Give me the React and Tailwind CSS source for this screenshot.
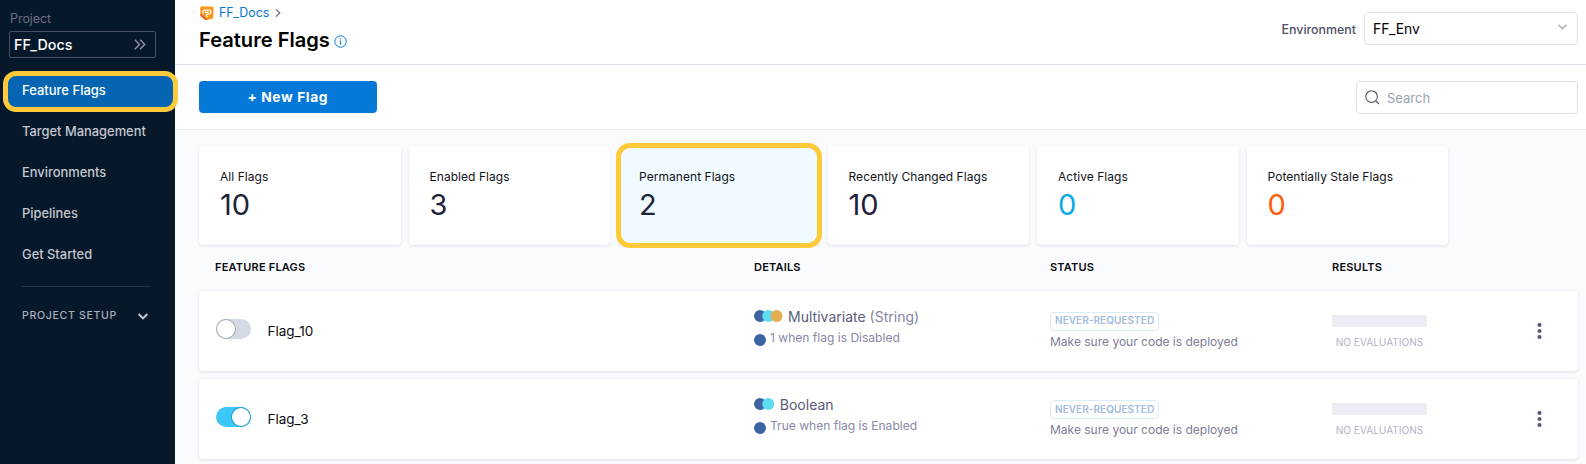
import React from "react";

const NAV = ["Target Management", "Environments", "Pipelines", "Get Started"];

const STATS = [
  { label: "All Flags", value: "10", color: "text-[#22223a]" },
  { label: "Enabled Flags", value: "3", color: "text-[#22223a]" },
  { label: "Permanent Flags", value: "2", color: "text-[#22223a]", selected: true },
  { label: "Recently Changed Flags", value: "10", color: "text-[#22223a]" },
  { label: "Active Flags", value: "0", color: "text-[#07a9e6]" },
  { label: "Potentially Stale Flags", value: "0", color: "text-[#ff5c0a]" },
];

const FLAGS = [
  { name: "Flag_10", on: false, type: "Multivariate", sub: "(String)", rule: "1 when flag is Disabled", dots: ["fill-[#3d64a3]", "fill-[#5fdcf0]", "fill-[#e2ae4f]"] },
  { name: "Flag_3", on: true, type: "Boolean", sub: "", rule: "True when flag is Enabled", dots: ["fill-[#3d64a3]", "fill-[#5fdcf0]"] },
];

function Sidebar() {
  return (
    <aside className="flex h-[464px] w-[175px] shrink-0 flex-col bg-[#07182b]">
      <div className="pt-[9px] pl-[10px] text-[12.6px] leading-5 tracking-[-0.1px] text-[#6b6d85]">Project</div>
      <div className="mt-[2px] ml-[9px] flex h-[27px] w-[147px] items-center justify-between rounded-[2px] border border-[#4a4f68] pr-[9px] pl-[4px]">
        <span className="pb-px text-[14.3px] font-medium leading-[23px] text-white">FF_Docs</span>
        <svg className="mb-px h-[11px] w-[12px]" viewBox="0 0 12 11" fill="none" stroke="#8c8fa3" strokeWidth="1.5">
          <path d="M0.8 0.8l4.7 4.7-4.7 4.7M6 0.8l4.7 4.7L6 10.2" />
        </svg>
      </div>
      <div className="relative z-10 mt-[12.5px] ml-[3px] flex h-[41px] w-[175px] shrink-0 items-center rounded-[13px] border-[5.5px] border-[#ffca3a] bg-[#0565b3] pb-px pl-[14px] text-[13px] font-medium text-white">
        Feature Flags
      </div>
      <nav className="flex flex-col pl-[22px]">
        {NAV.map((n) => (
          <div key={n} className="flex h-[40.9px] items-center text-[12.9px] font-medium text-[#c3c6cd]">{n}</div>
        ))}
      </nav>
      <div className="mt-[11px] ml-[22px] h-px w-[129px] bg-[#26364a]" />
      <div className="mt-[19px] ml-[22px] flex h-5 w-[126px] items-center justify-between">
        <span className="text-[10.6px] font-medium tracking-[0.65px] text-[#a9adb8]">PROJECT SETUP</span>
        <svg className="h-[7px] w-[10px]" viewBox="0 0 10 7" fill="none" stroke="#c3c6cd" strokeWidth="2">
          <path d="M0.7 1L5 5.4L9.3 1" />
        </svg>
      </div>
    </aside>
  );
}

function Header() {
  return (
    <header className="flex h-[65px] justify-between border-b border-[#e0e0ed] bg-white pr-[8px] pl-[24px]">
      <div className="flex flex-col">
        <div className="mt-[3px] flex h-5 items-center">
          <svg className="mb-px ml-px h-[14px] w-[14px]" viewBox="0 0 14 14">
            <path d="M2 0.2L11.6 0.6Q13.6 0.8 13.6 2.6L13.3 11.2Q13.2 12.8 11.8 13L6.8 13.8Q5.4 14 4.4 13.3L1.2 10.6Q0.5 10 0.5 9L0.2 2Q0.2 0.2 2 0.2Z" fill="#f7981d" />
            <path d="M0.4 7.6L3.4 10L8 13.6L6.4 13.9Q5.2 14 4.4 13.3L1.2 10.6Q0.5 10 0.5 9Z" fill="#e8601e" />
            <path d="M3 7.2Q2.4 4.2 5 4.1L9 4.2Q11.2 4.6 10.9 6.3Q10.6 7.7 9 8L6.2 8.6L7 10.8M5.2 6.4H8.2" fill="none" stroke="#fff" strokeWidth="1.2" strokeLinecap="round" strokeLinejoin="round" />
          </svg>
          <span className="ml-[5px] text-[12.4px] text-[#0278d5]">FF_Docs</span>
          <svg className="ml-[6px] h-[8px] w-[6px]" viewBox="0 0 6 8" fill="none" stroke="#6b6d85" strokeWidth="1.2">
            <path d="M1 0.4L4.8 4L1 7.6" />
          </svg>
        </div>
        <div className="mt-[4px] flex h-[26px] items-center">
          <h1 className="text-[20.1px] font-semibold leading-[26px] text-black">Feature Flags</h1>
          <svg className="mt-[2px] ml-[4px] h-[13px] w-[13px]" viewBox="0 0 13 13" fill="none" stroke="#0278d5">
            <circle cx="6.5" cy="6.5" r="5.7" strokeWidth="1" />
            <path d="M6.5 5.6V9.4M6.5 3.4V4.6" strokeWidth="1.2" />
          </svg>
        </div>
      </div>
      <div className="mt-[12px] flex h-[33px] items-center">
        <span className="mr-[8px] pt-[3px] text-[12.4px] font-medium text-[#4f5068]">Environment</span>
        <div className="flex h-[33px] w-[214px] items-center justify-between rounded-[4px] border border-[#dfdfeb] bg-white pr-[10px] pl-[8px]">
          <span className="pt-px text-[13.9px] leading-5 text-black">FF_Env</span>
          <svg className="mb-[3px] h-[6px] w-[9px]" viewBox="0 0 9 6" fill="none" stroke="#a9abb8" strokeWidth="1.4">
            <path d="M0.6 0.8L4.5 4.8L8.4 0.8" />
          </svg>
        </div>
      </div>
    </header>
  );
}

function Toolbar() {
  return (
    <div className="flex h-[65px] items-center justify-between border-b border-[#e9ebf3] bg-white pr-[8px] pl-[24px]">
      <button className="h-[32px] w-[177.5px] rounded-[4px] bg-[#0678d8] text-[13.8px] font-bold tracking-[0.6px] text-white">+ New Flag</button>
      <div className="flex h-[33px] w-[222px] items-center rounded-[4px] border border-[#dfdfeb] pl-[8px]">
        <svg className="h-[15px] w-[15px]" viewBox="0 0 15 15" fill="none" stroke="#4f5162" strokeWidth="1.1">
          <circle cx="6.6" cy="6.6" r="5.8" />
          <path d="M10.8 10.8L14 14" />
        </svg>
        <span className="ml-[7px] pt-px text-[13px] leading-5 text-[#97a3b2]">Search</span>
      </div>
    </div>
  );
}

function StatCard({ label, value, color, selected }) {
  return (
    <div className={"relative h-[99px] w-[201.5px] rounded-[4px] pt-[21px] pl-[21px] shadow-[0_1px_3px_rgba(40,41,61,0.12)] " + (selected ? "bg-[#effbff]" : "bg-white")}>
      <div className="text-[12px] leading-5 tracking-[0.05px] text-[#111118]">{label}</div>
      <div className={"mt-[1px] text-[29px] leading-[34px] " + color}>{value}</div>
      {selected && <div className="absolute -top-[3px] -left-[2px] h-[105px] w-[206px] rounded-[14px] border-[5.5px] border-[#ffca3a]" />}
    </div>
  );
}

function Toggle({ on }) {
  return (
    <div className={"flex h-[20px] w-[35px] items-center rounded-full px-px " + (on ? "justify-end bg-[#3dc7f6]" : "bg-[#d3dae3]")}>
      <div className={"h-[18px] w-[18px] rounded-full bg-white " + (on ? "shadow-[0_0_0_1px_#1c9fd0]" : "shadow-[0_0_0_1px_#a3abb6]")} />
    </div>
  );
}

function FlagRow({ flag }) {
  const w = 12 + (flag.dots.length - 1) * 8.3;
  return (
    <div className="flex h-[80px] rounded-[4px] bg-white shadow-[0_1px_3px_rgba(40,41,61,0.14)]">
      <div className="flex w-[555px] pl-[17px]">
        <div className="pt-[28px]"><Toggle on={flag.on} /></div>
        <div className="pt-[30px] pl-[16.5px] text-[13.5px] leading-5 text-[#0b0b0d]">{flag.name}</div>
      </div>
      <div className="w-[296px]">
        <div className="mt-[14px] flex h-6 items-center">
          <svg className="mb-[3px] h-[12px]" width={w} height="12">
            {flag.dots.map((c, i) => <circle key={c} cx={6 + i * 8.3} cy="6" r="6" className={c} />)}
          </svg>
          <span className="ml-[5.5px] text-[14px] leading-5 text-[#5a5b78]">{flag.type}</span>
          {flag.sub && <span className="ml-[4px] text-[14px] leading-5 text-[#8485a4]">{flag.sub}</span>}
        </div>
        <div className="flex h-[18px] items-center">
          <svg className="mt-[4px] h-[12px] w-[12px]" viewBox="0 0 12 12"><circle cx="6" cy="6" r="6" className="fill-[#3d64a3]" /></svg>
          <span className="ml-[4px] text-[12.05px] text-[#8888a6]">{flag.rule}</span>
        </div>
      </div>
      <div className="w-[282px] pt-[21px]">
        <div className="flex h-[19px] w-[109px] items-center rounded-[4px] border border-[#dceaf3] pb-px pl-[4px] text-[10.1px] font-semibold whitespace-nowrap text-[#a3bbdc]">NEVER-REQUESTED</div>
        <div className="mt-[1px] text-[12px] leading-5 text-[#7d7d96]">Make sure your code is deployed</div>
      </div>
      <div className="w-[95px] pt-[24px]">
        <div className="h-[12px] rounded-[2px] bg-[#ececf5]" />
        <div className="mt-[5px] text-center text-[10.1px] leading-5 text-[#b2b2c8]">NO EVALUATIONS</div>
      </div>
      <div className="pt-[32px] pl-[109.5px]">
        <svg className="h-[17px] w-[5px]" viewBox="0 0 5 17" fill="#5a5b7c">
          <circle cx="2.5" cy="2" r="2.1" /><circle cx="2.5" cy="8" r="2.1" /><circle cx="2.5" cy="14" r="2.1" />
        </svg>
      </div>
    </div>
  );
}

export default function App() {
  return (
    <div className="flex h-[464px] w-[1586px] overflow-hidden bg-[#fafbff] font-['Inter',sans-serif]">
      <Sidebar />
      <main className="flex w-[1411px] flex-col">
        <Header />
        <Toolbar />
        <div className="mt-[16px] flex gap-[8px] pl-[24px]">
          {STATS.map((s) => <StatCard key={s.label} {...s} />)}
        </div>
        <div className="mt-[12px] flex h-5 items-center pl-[40px] text-[11px] font-semibold tracking-[0.2px] text-[#0b0b0d]">
          <span className="w-[539px]">FEATURE FLAGS</span>
          <span className="w-[296px]">DETAILS</span>
          <span className="w-[282px]">STATUS</span>
          <span>RESULTS</span>
        </div>
        <div className="mt-[14px] flex flex-col gap-[8.4px] pr-[8px] pl-[24px]">
          {FLAGS.map((f) => <FlagRow key={f.name} flag={f} />)}
        </div>
      </main>
    </div>
  );
}
